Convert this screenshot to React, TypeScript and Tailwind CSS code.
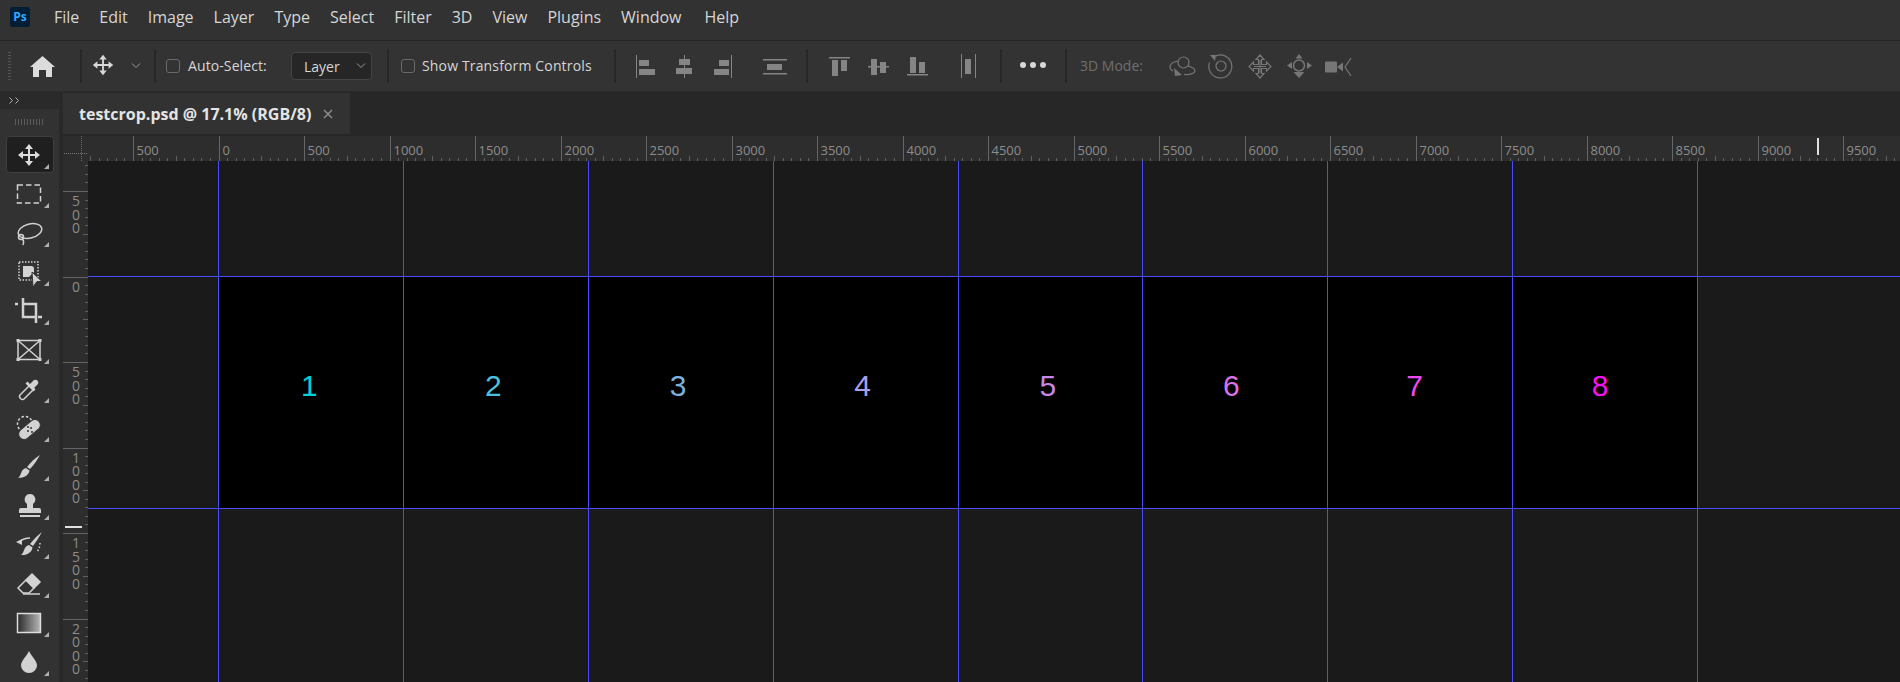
const MENU = ["File", "Edit", "Image", "Layer", "Type", "Select", "Filter", "3D", "View", "Plugins", "Window"];
const DIGITS = [
  { n: 1, cls: "text-[#00d0d8] pr-[3px]" },
  { n: 2, cls: "text-[#4cc0dc] pr-[5px]" },
  { n: 3, cls: "text-[#7db0de] pr-[5px]" },
  { n: 4, cls: "text-[#a8a0e6] pr-[6px]" },
  { n: 5, cls: "text-[#c688e6] pr-[5px]" },
  { n: 6, cls: "text-[#dc70e8] pr-[8px]" },
  { n: 7, cls: "text-[#ee48f0] pr-[11px]" },
  { n: 8, cls: "text-[#fb10f4] pr-[10px]" },
];

function MoveIcon({ size = 28 }: { size?: number }) {
  return (
    <svg width={size} height={size} viewBox="0 0 28 28" fill="#d8d8d8">
      <path d="M14 3l4 5h-3v5h5v-3l5 4-5 4v-3h-5v5h3l-4 5-4-5h3v-5H8v3l-5-4 5-4v3h5V8h-3z" />
    </svg>
  );
}

function Chevron({ color = "#9a9a9a" }: { color?: string }) {
  return (
    <svg width="10" height="6" viewBox="0 0 10 6" fill="none" stroke={color} strokeWidth="1">
      <path d="M1 .5l4 4 4-4" />
    </svg>
  );
}

function Sep() {
  return <div className="h-[34px] w-[2px] shrink-0 bg-[#272727]" />;
}

function Checkbox() {
  return <div className="h-[14px] w-[14px] shrink-0 rounded-[3px] border border-[#6a6a6a]" />;
}

function AlignIcons() {
  return (
    <svg width="154" height="34" viewBox="636 49 154 34" fill="#858585" className="shrink-0">
      <rect x="636" y="55" width="1" height="23" />
      <rect x="639" y="60" width="10" height="6" />
      <rect x="639" y="69" width="16" height="6" />
      <rect x="684" y="55" width="1" height="23" />
      <rect x="679" y="59" width="11" height="6" />
      <rect x="676" y="68" width="16" height="6" />
      <rect x="731" y="55" width="1" height="23" />
      <rect x="719" y="60" width="10" height="6" />
      <rect x="714" y="69" width="15" height="6" />
      <rect x="763" y="59" width="24" height="1.5" />
      <rect x="767" y="64" width="15" height="6" />
      <rect x="763" y="73" width="24" height="1.5" />
    </svg>
  );
}

function ValignIcons() {
  return (
    <svg width="154" height="34" viewBox="826 49 154 34" fill="#858585" className="shrink-0">
      <rect x="829" y="57" width="21" height="1.5" />
      <rect x="832" y="60" width="6" height="16" />
      <rect x="841" y="60" width="6" height="11" />
      <rect x="868" y="66" width="21" height="1.5" />
      <rect x="871" y="59" width="6" height="16" />
      <rect x="880" y="62" width="6" height="11" />
      <rect x="907" y="74" width="21" height="1.5" />
      <rect x="910" y="57" width="6" height="16" />
      <rect x="919" y="62" width="6" height="11" />
      <rect x="961" y="54" width="1" height="24" />
      <rect x="975" y="54" width="1" height="24" />
      <rect x="965" y="59" width="6" height="15" />
    </svg>
  );
}

function ThreeDIcons() {
  return (
    <svg width="190" height="34" viewBox="1165 49 190 34" fill="none" stroke="#767676" strokeWidth="1.2" className="shrink-0">
      {/* orbit */}
      <circle cx="1183.5" cy="62.5" r="5.5" />
      <path d="M1178 61c-5 1-8 3-8 6 0 1.500 1 3 3 4" />
      <path d="M1188 66c4 1 7 3 7 5 0 2-4 4-11 3.500" />
      <path d="M1174 68l1 8 7-1z" fill="#767676" stroke="none" />
      {/* roll */}
      <path d="M1214.500 56.500a11.500 11.500 0 1 1-5 6" />
      <circle cx="1221" cy="66" r="5" />
      <path d="M1210 55l6 0-1 6z" fill="#767676" stroke="none" />
      {/* pan */}
      <path d="M1260 55l4 4.500h-2.500v5h5V62l4.500 4.500-4.500 4.500v-2.500h-5v5h2.500l-4 4.500-4-4.500h2.500v-5h-5V71l-4.500-4.500 4.500-4.500v2.500h5v-5H1256z" />
      <path d="M1260 60v13M1254 66.500h12" />
      {/* slide */}
      <circle cx="1299" cy="65.500" r="5.500" strokeWidth="1.500" />
      <path d="M1299 54l3.500 4.500h-7zM1299 78l-5.500-6h11zM1287 65.500l5-3.500v7zM1312 65.500l-5-3.500v7z" fill="#767676" stroke="none" />
      {/* camera */}
      <rect x="1325" y="61.500" width="12" height="11" rx="1" fill="#767676" stroke="none" />
      <path d="M1337 67l6-4.500v9z" fill="#767676" stroke="none" />
      <path d="M1351 58l-6 9 6 9" />
    </svg>
  );
}

/* toolbar drawings, all on a 28 box centred on the tool */
function ToolIcon({ name }: { name: string }) {
  const c = "#d2d2d2";
  return (
    <svg width="28" height="28" viewBox="0 0 28 28" fill="none" stroke={c} strokeWidth="1.5">
      {name === "move" && (
        <path fill="#dcdcdc" stroke="none" d="M14 3l4 5h-3v5h5v-3l5 4-5 4v-3h-5v5h3l-4 5-4-5h3v-5H8v3l-5-4 5-4v3h5V8h-3z" />
      )}
      {name === "marquee" && (
        <rect x="2.500" y="5" width="23" height="18" strokeDasharray="5.500 3" />
      )}
      {name === "lasso" && (
        <>
          <ellipse cx="15" cy="12" rx="12" ry="7" transform="rotate(-14 15 12)" />
          <circle cx="6" cy="18" r="2.500" />
          <path d="M7 20c2 1 2 3 1 6" />
        </>
      )}
      {name === "subject" && (
        <>
          <rect x="4" y="4" width="19" height="18" strokeDasharray="1.500 1.500" />
          <path d="M8 8h8a3 3 0 0 1 3 3v3l-5 5H8z" fill={c} stroke="none" />
          <path d="M17 14l10 9.500h-5L18 29z" fill={c} stroke="#323232" strokeWidth="1" />
        </>
      )}
      {name === "crop" && (
        <g strokeWidth="2.500">
          <path d="M0 7h3" />
          <path d="M8 1v19h12" />
          <path d="M9 7h12v12" />
          <path d="M21 19v7M23 20h4" />
        </g>
      )}
      {name === "frame" && (
        <>
          <rect x="3" y="4.500" width="22" height="19" />
          <path d="M3 4.500l22 19M25 4.500l-22 19" />
          <path d="M1.500 3h3v3h-3zM23.500 3h3v3h-3zM1.500 22h3v3h-3zM23.500 22h3v3h-3z" fill={c} stroke="none" />
        </>
      )}
      {name === "dropper" && (
        <>
          <path d="M5 20l10-10 4 4-10 10c-2 2-6-2-4-4z" />
          <path d="M15 9l4-4a3 3 0 0 1 4 4l-4 4 1.500 1.500-2 2-8-8 2-2z" fill={c} stroke="none" />
        </>
      )}
      {name === "heal" && (
        <>
          <circle cx="10" cy="10" r="7.500" strokeDasharray="2.500 2" />
          <rect x="2" y="10" width="25" height="11" rx="5.500" transform="rotate(-40 14.500 15.500)" fill={c} stroke="#323232" strokeWidth="1" />
          <circle cx="13" cy="17" r="1" fill="#323232" stroke="none" />
          <circle cx="16" cy="14" r="1" fill="#323232" stroke="none" />
          <circle cx="13" cy="13" r="1" fill="#323232" stroke="none" />
          <circle cx="17" cy="18" r="1" fill="#323232" stroke="none" />
        </>
      )}
      {name === "brush" && (
        <g fill={c} stroke="none">
          <path d="M25 2c-3 5-6 10-10 14l-3-2c4-5 8-9 13-12z" />
          <path d="M11 15l3.500 2.500C14 22 9.500 25 3 25c3.500-2 2.500-9 8-10z" />
        </g>
      )}
      {name === "stamp" && (
        <g fill={c} stroke="none">
          <path d="M15 2a5.500 5.500 0 0 1 3 10v4h6a2 2 0 0 1 2 2v3H4v-3a2 2 0 0 1 2-2h6v-4a5.500 5.500 0 0 1 3-10z" />
          <rect x="5" y="23" width="20" height="2" />
        </g>
      )}
      {name === "history" && (
        <>
          <g fill={c} stroke="none">
            <path d="M27 1c-3 5-6 10-9 14l-3-2c4-5 8-9 12-12z" />
            <path d="M14 14l3.500 2.500C17 21 12.500 24.500 6 24c3.500-2 2.500-9 8-10z" />
            <path d="M1 11l6-3 0 6z" />
          </g>
          <path d="M6 10c2-2 5-3 9-3" />
          <path d="M25 12c0 3-1 6-3 9" strokeDasharray="1.500 2" />
        </>
      )}
      {name === "eraser" && (
        <>
          <path d="M17 4l8 8-6 6-8-8z" fill={c} stroke={c} />
          <path d="M11 10l8 8-5 5H8l-5-5z" />
          <path d="M8 24h17" />
        </>
      )}
      {name === "gradient" && (
        <>
          <defs>
            <linearGradient id="gradTool">
              <stop offset="0" stopColor="#2a2a2a" />
              <stop offset="1" stopColor="#b8b8b8" />
            </linearGradient>
          </defs>
          <rect x="2.500" y="4.500" width="23" height="19" fill="url(#gradTool)" stroke="#dcdcdc" />
        </>
      )}
      {name === "drop" && (
        <path fill={c} stroke="none" d="M14 3C11 9 6 13 6 17.500a8 7.500 0 0 0 16 0C22 13 17 9 14 3z" />
      )}
    </svg>
  );
}

const TOOLS = ["move", "marquee", "lasso", "subject", "crop", "frame", "dropper", "heal", "brush", "stamp", "history", "eraser", "gradient", "drop"];

function Toolbar() {
  return (
    <div className="flex w-[63px] shrink-0 flex-col border-r-[4px] border-[#292929] bg-[#323232]">
      <div className="flex h-[17px] items-center bg-[#2a2a2a] pl-[9px]">
        <svg width="11" height="7" viewBox="0 0 11 7" fill="none" stroke="#b4b4b4" strokeWidth="1">
          <path d="M.5.5l3 3-3 3M6.500.5l3 3-3 3" />
        </svg>
      </div>
      <div className="flex h-[26px] items-center justify-center pr-[1px]">
        <div className="h-[6px] w-[29px] bg-[repeating-linear-gradient(90deg,#5c5c5c_0,#5c5c5c_1px,transparent_1px,transparent_3px)]" />
      </div>
      {TOOLS.map((t, i) => (
        <div key={t} className="relative flex h-[39px] items-center justify-center pr-[1px]">
          {i === 0 && <div className="absolute left-[6px] top-[1px] h-[37px] w-[48px] rounded-[4px] border border-[#3e3e3e] bg-[#1f1f1f]" />}
          <div className="relative flex items-center justify-center">
            <ToolIcon name={t} />
          </div>
          <div className="absolute left-[44px] top-[29px] h-0 w-0 border-b-[5px] border-l-[5px] border-b-[#b0b0b0] border-l-transparent" />
        </div>
      ))}
    </div>
  );
}

function HRuler() {
  const majors = [500, 0, 500, 1000, 1500, 2000, 2500, 3000, 3500, 4000, 4500, 5000, 5500, 6000, 6500, 7000, 7500, 8000, 8500, 9000, 9500];
  const origin = 45; // x of the "500" tick, counted from the ruler's left edge
  const ticks: number[] = [];
  for (let i = -6; i < 220; i++) ticks.push(i);
  return (
    <svg width="1812" height="25" className="block">
      {ticks.map((i) => {
        if (i % 10 === 0) return null;
        const x = Math.round(origin + i * 8.55) + 0.5;
        return <line key={i} x1={x} x2={x} y1={Math.abs(i % 5) === 0 ? 20 : 22} y2={25} stroke="#606060" />;
      })}
      {majors.map((label, i) => {
        const x = Math.round(origin + i * 85.5) + 0.5;
        return (
          <g key={i}>
            <line x1={x} x2={x} y1={0} y2={25} stroke="#666666" />
            <text x={x + 3} y={19} fill="#8c8c8c" fontSize="13" fontFamily="'Open Sans', sans-serif">{label}</text>
          </g>
        );
      })}
    </svg>
  );
}

function VRuler() {
  const labels = ["500", "0", "500", "1000", "1500", "2000"];
  const ticks: number[] = [];
  for (let i = -4; i < 60; i++) ticks.push(i);
  return (
    <div className="relative h-[521px] w-[25px] shrink-0 overflow-hidden bg-[#2d2d2d]">
      <svg width="25" height="521" className="block">
        {ticks.map((i) => {
          if (i % 10 === 0) return null;
          const y = Math.round(30 + i * 8.55) + 0.5;
          return <line key={i} x1={Math.abs(i % 5) === 0 ? 20 : 22} x2={25} y1={y} y2={y} stroke="#606060" />;
        })}
      </svg>
      {/* labels sit over the ticks, one cell per 500 units */}
      <div className="absolute left-0 top-[30px] w-[25px]">
        {labels.map((label, i) => (
          <div key={i} className="h-[85.500px] border-t border-[#666666] pl-[8px] pt-[2px]">
            <div className="w-[10px] break-all text-center text-[14px] leading-[13.500px] text-[#8c8c8c]">{label}</div>
          </div>
        ))}
      </div>
      <div className="absolute left-[2px] top-[365px] h-[2px] w-[17px] bg-[#e0e0e0]" />
    </div>
  );
}

function Canvas() {
  const cols = [0, 1, 2, 3, 4, 5, 6, 7, 8, 9];
  return (
    <div className="grid h-[521px] flex-1 grid-cols-[130px_repeat(8,184.875px)_1fr] grid-rows-[115px_232px_1fr] bg-[#1a1a1a]">
      {[0, 1, 2].map((row) =>
        cols.map((col) => {
          const digit = row === 1 && col >= 1 && col <= 8 ? DIGITS[col - 1] : null;
          return (
            <div
              key={`${row}-${col}`}
              className={`flex items-center justify-center border-[#4b4bff] pb-[14px] font-['Liberation_Sans',sans-serif] text-[30px] font-light leading-none ${col > 0 ? "border-l" : ""} ${row > 0 ? "border-t" : ""} ${digit ? "bg-black" : ""} ${digit ? digit.cls : ""}`}
            >
              {digit ? digit.n : null}
            </div>
          );
        })
      )}
    </div>
  );
}

export default function App() {
  return (
    <div className="relative h-[682px] w-[1900px] overflow-hidden bg-[#272727] font-['Open_Sans',sans-serif] text-[#d6d6d6]">
      {/* Menu bar */}
      <div className="flex h-[41px] items-center border-b border-[#272727] bg-[#323232] pb-[6px] text-[16px]">
        <div className="ml-[10px] flex h-[20px] w-[20px] items-center justify-center rounded-[3px] bg-[#001e36] text-[12px] font-bold leading-none text-[#31a8ff]">Ps</div>
        <div className="ml-[24px] flex gap-[20px]">
          {MENU.map((m) => (
            <span key={m}>{m}</span>
          ))}
          <span className="ml-[3px]">Help</span>
        </div>
      </div>

      {/* Options bar */}
      <div className="flex h-[51px] items-center border-b border-[#2b2b2b] bg-[#333333] text-[14px]">
        <div className="ml-[8px] h-[28px] w-[3px] shrink-0 bg-[repeating-linear-gradient(0deg,#555555_0,#555555_1px,transparent_1px,transparent_3px)]" />
        <svg width="25" height="21" viewBox="0 0 25 21" fill="#dcdcdc" className="ml-[19px] shrink-0">
          <path d="M12.500 0L25 11h-3v10h-6v-7H9v7H3V11H0z" />
        </svg>
        <div className="ml-[25px]"><Sep /></div>
        <div className="ml-[8px] -mt-[2px] shrink-0"><MoveIcon size={26} /></div>
        <div className="ml-[15px] flex shrink-0 items-center"><Chevron /></div>
        <div className="ml-[13px]"><Sep /></div>
        <div className="ml-[10px] -mt-[1px]"><Checkbox /></div>
        <span className="-mt-[2px] ml-[8px] w-[79px] shrink-0 whitespace-nowrap tracking-[0.1px]">Auto-Select:</span>
        <div className="ml-[24px] flex h-[28px] w-[81px] shrink-0 items-center rounded-[4px] border border-[#444444] bg-[#262626] pl-[12px]">
          <span>Layer</span>
          <div className="ml-auto mr-[5px] flex items-center"><Chevron /></div>
        </div>
        <div className="ml-[15px]"><Sep /></div>
        <div className="ml-[12px] -mt-[1px]"><Checkbox /></div>
        <span className="-mt-[2px] ml-[7px] w-[172px] shrink-0 whitespace-nowrap tracking-[0.15px]">Show Transform Controls</span>
        <div className="ml-[20px]"><Sep /></div>
        <div className="ml-[20px] flex items-center"><AlignIcons /></div>
        <div className="ml-[16px]"><Sep /></div>
        <div className="ml-[18px] flex items-center"><ValignIcons /></div>
        <div className="ml-[20px]"><Sep /></div>
        <div className="ml-[18px] -mt-[2px] flex w-[26px] shrink-0 justify-between">
          <div className="h-[6px] w-[6px] rounded-full bg-[#d8d8d8]" />
          <div className="h-[6px] w-[6px] rounded-full bg-[#d8d8d8]" />
          <div className="h-[6px] w-[6px] rounded-full bg-[#d8d8d8]" />
        </div>
        <div className="ml-[19px]"><Sep /></div>
        <span className="-mt-[2px] ml-[13px] w-[65px] shrink-0 whitespace-nowrap text-[#6f6f6f]">3D Mode:</span>
        <div className="ml-[20px] flex items-center"><ThreeDIcons /></div>
      </div>

      <div className="flex">
        <Toolbar />
        <div className="flex w-[1837px] flex-col">
          {/* Tab */}
          <div className="h-[44px] bg-[#272727] pt-px">
            <div className="flex h-[41px] w-[287px] items-center bg-[#323232] pl-[16px] text-[16px] font-bold text-[#e4e4e4]">
              <span className="whitespace-nowrap">testcrop.psd @ 17.1% (RGB/8)</span>
              <svg width="10" height="10" viewBox="0 0 10 10" stroke="#8c8c8c" strokeWidth="1.500" className="ml-[12px] shrink-0">
                <path d="M1 1l8 8M9 1L1 9" />
              </svg>
            </div>
          </div>

          {/* Ruler row */}
          <div className="flex h-[25px] bg-[#2d2d2d]">
            <div className="relative h-[25px] w-[25px] shrink-0">
              <div className="absolute left-[18px] top-0 h-[25px] w-px bg-[repeating-linear-gradient(0deg,#666666_0,#666666_1px,transparent_1px,transparent_2px)]" />
              <div className="absolute left-px top-[17px] h-px w-[24px] bg-[repeating-linear-gradient(90deg,#777777_0,#777777_1px,transparent_1px,transparent_2px)]" />
            </div>
            <div className="relative">
              <HRuler />
              <div className="absolute left-[1729px] top-[2px] h-[17px] w-[2px] bg-[#e0e0e0]" />
            </div>
          </div>

          <div className="flex">
            <VRuler />
            <Canvas />
          </div>
        </div>
      </div>
    </div>
  );
}
